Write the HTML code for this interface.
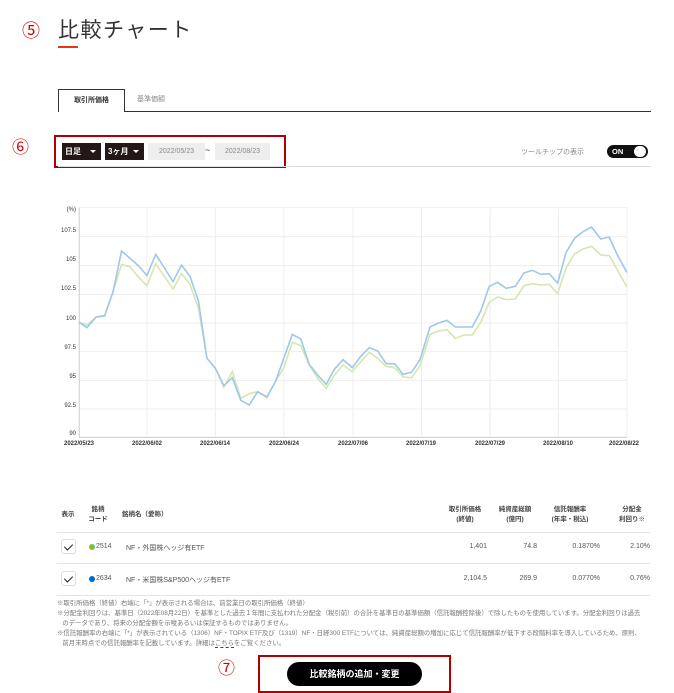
<!DOCTYPE html>
<html><head><meta charset="utf-8"><style>
*{margin:0;padding:0;box-sizing:border-box}
body{width:674px;height:692px;background:#fff;position:relative;overflow:hidden;font-family:"Liberation Sans","Noto Sans CJK JP",sans-serif;color:#333}
.a{position:absolute;white-space:nowrap}
.red{color:#d00000}
.sel{position:absolute;background:#231815;color:#fff;font-size:8px;font-weight:bold;height:17px;line-height:17px;padding-left:3px}
.sel:after{content:"";position:absolute;right:5px;top:7px;border:3px solid transparent;border-top:3px solid #fff}
.date{position:absolute;background:#eee;color:#888;font-size:7px;height:17px;line-height:17px;text-align:center}
.th{position:absolute;font-size:6.5px;font-weight:bold;color:#444;text-align:center;line-height:10px}
.td{position:absolute;font-size:7px;color:#555}
.r{text-align:right}
.cb{position:absolute;width:15px;height:15px;border:1px solid #ddd;border-radius:3px;background:#fff}
.cb:after{content:"";position:absolute;left:4px;top:2px;width:4px;height:7px;border:solid #222;border-width:0 1.5px 1.5px 0;transform:rotate(45deg)}
.hl{position:absolute;left:58px;width:593px;height:1px;background:#e4e4e4}
.note{position:absolute;left:57px;font-size:6.4px;color:#777;line-height:10px;white-space:nowrap}
.yl{position:absolute;width:26px;left:50px;text-align:right;font-size:6px;color:#333}
.xl{position:absolute;width:60px;margin-left:-30px;text-align:center;font-size:6px;font-weight:bold;color:#333;top:441px}
</style></head><body>
<div class="a red" style="left:22px;top:17px;font-size:18px">⑤</div>
<div class="a" style="left:58px;top:14px;font-size:21px;color:#333;letter-spacing:1.5px">比較チャート</div>
<div class="a" style="left:58px;top:46px;width:20px;height:2px;background:#e8380d"></div>

<div class="a" style="left:58px;top:89px;width:67px;height:23px;border:1px solid #333;border-bottom:none;background:#fff;font-size:7px;font-weight:bold;text-align:center;line-height:21px">取引所価格</div>
<div class="a" style="left:137px;top:94px;font-size:7px;color:#888">基準価額</div>
<div class="a" style="left:124px;top:111px;width:527px;height:1px;background:#333"></div>

<div class="a red" style="left:12px;top:133px;font-size:17px">⑥</div>
<div class="a" style="left:54px;top:135px;width:232px;height:33px;border:2px solid #b20000"></div>
<div class="sel" style="left:62px;top:143px;width:39px">日足</div>
<div class="sel" style="left:105px;top:143px;width:39px">3ヶ月</div>
<div class="date" style="left:148px;top:143px;width:57px">2022/05/23</div>
<div class="a" style="left:205px;top:145px;font-size:9px">~</div>
<div class="date" style="left:215px;top:143px;width:55px">2022/08/23</div>
<div class="a" style="left:521px;top:147px;font-size:7px;color:#888">ツールチップの表示</div>
<div class="a" style="left:607px;top:145px;width:41px;height:13px;border-radius:7px;background:#111;color:#fff;font-size:7.5px;font-weight:bold;line-height:13px;padding-left:5px">ON</div>
<div class="a" style="left:634px;top:146px;width:12px;height:11px;border-radius:6px;background:#fff"></div>
<div class="a" style="left:58px;top:166px;width:593px;height:1px;background:#ddd"></div>

<svg class="a" style="left:50px;top:195px" width="600" height="260" viewBox="0 0 1560 780" preserveAspectRatio="none">
<g stroke="#eee" stroke-width="1" fill="none" vector-effect="non-scaling-stroke">
<path vector-effect="non-scaling-stroke" d="M76 125H1500M76 212H1500M76 298H1500M76 384H1500M76 470H1500M76 556H1500M76 642H1500M76 38H1500"/>
<path vector-effect="non-scaling-stroke" d="M252 38V727M430 38V727M608 38V727M788 38V727M966 38V727M1144 38V727M1322 38V727M1500 38V727"/>
</g>
<path vector-effect="non-scaling-stroke" d="M76 38V727H1500" stroke="#ccc" stroke-width="1" fill="none"/>
<polyline vector-effect="non-scaling-stroke" fill="none" stroke="#d3e8b0" stroke-width="1.6" points="76,382 96,390 120,366 142,364 164,290 186,208 208,216 230,246 252,272 275,206 297,244 320,282 342,236 364,268 386,340 408,490 430,520 452,576 474,530 496,610 518,596 540,590 564,608 586,560 608,518 630,442 652,452 674,510 696,550 718,580 740,540 762,510 786,530 808,500 830,472 852,490 874,514 896,518 918,546 940,548 962,512 988,418 1010,408 1032,404 1054,430 1076,420 1098,420 1120,382 1142,322 1164,306 1186,314 1210,312 1232,272 1254,266 1276,270 1298,268 1320,296 1342,218 1364,176 1386,162 1408,154 1432,180 1454,182 1476,226 1500,276"/>
<polyline vector-effect="non-scaling-stroke" fill="none" stroke="#9fc8e8" stroke-width="1.6" points="76,382 96,398 120,366 142,362 164,290 186,168 208,190 230,212 252,242 275,178 297,218 320,260 342,210 364,244 386,318 408,490 430,520 452,572 474,548 496,616 518,630 540,590 564,606 586,560 608,490 630,418 652,432 674,508 696,540 718,568 740,522 762,494 786,518 808,484 830,458 852,468 874,506 896,506 918,538 940,532 962,494 988,396 1010,384 1032,376 1054,396 1076,396 1098,396 1120,348 1142,274 1164,262 1186,280 1210,274 1232,234 1254,226 1276,238 1298,236 1320,264 1342,172 1364,130 1386,110 1408,96 1432,132 1454,126 1476,182 1500,232"/>
</svg>
<div class="yl" style="top:207px">(%)</div>
<div class="yl" style="top:228px">107.5</div>
<div class="yl" style="top:257px">105</div>
<div class="yl" style="top:286px">102.5</div>
<div class="yl" style="top:316px">100</div>
<div class="yl" style="top:345px">97.5</div>
<div class="yl" style="top:374px">95</div>
<div class="yl" style="top:403px">92.5</div>
<div class="yl" style="top:431px">90</div>
<div class="xl" style="left:79px">2022/05/23</div>
<div class="xl" style="left:147px">2022/06/02</div>
<div class="xl" style="left:215px">2022/06/14</div>
<div class="xl" style="left:284px">2022/06/24</div>
<div class="xl" style="left:353px">2022/07/06</div>
<div class="xl" style="left:421px">2022/07/19</div>
<div class="xl" style="left:490px">2022/07/29</div>
<div class="xl" style="left:558px">2022/08/10</div>
<div class="xl" style="left:624px">2022/08/22</div>

<div class="th" style="left:58px;top:510px;width:20px">表示</div>
<div class="th" style="left:86px;top:505px;width:24px">銘柄<br>コード</div>
<div class="th" style="left:122px;top:510px;text-align:left">銘柄名（愛称）</div>
<div class="th" style="left:440px;top:505px;width:50px">取引所価格<br>(終値)</div>
<div class="th" style="left:490px;top:505px;width:50px">純資産総額<br>(億円)</div>
<div class="th" style="left:540px;top:505px;width:60px">信託報酬率<br>(年率・税込)</div>
<div class="th" style="left:610px;top:505px;width:44px">分配金<br>利回り※</div>
<div class="hl" style="top:532px;left:57px"></div>
<div class="cb" style="left:61px;top:539px"></div>
<div class="a" style="left:89px;top:544px;width:6px;height:6px;border-radius:50%;background:#7ac143"></div>
<div class="td" style="left:96px;top:543px">2514</div>
<div class="td" style="left:126px;top:543px">NF・外国株ヘッジ有ETF</div>
<div class="td r" style="left:400px;top:543px;width:87px">1,401</div>
<div class="td r" style="left:480px;top:543px;width:57px">74.8</div>
<div class="td r" style="left:540px;top:543px;width:60px">0.1870%</div>
<div class="td r" style="left:600px;top:543px;width:50px">2.10%</div>
<div class="hl" style="top:563px;left:57px"></div>
<div class="cb" style="left:61px;top:571px"></div>
<div class="a" style="left:89px;top:576px;width:6px;height:6px;border-radius:50%;background:#0068c8"></div>
<div class="td" style="left:96px;top:575px">2634</div>
<div class="td" style="left:126px;top:575px">NF・米国株S&amp;P500ヘッジ有ETF</div>
<div class="td r" style="left:400px;top:575px;width:87px">2,104.5</div>
<div class="td r" style="left:480px;top:575px;width:57px">269.9</div>
<div class="td r" style="left:540px;top:575px;width:60px">0.0770%</div>
<div class="td r" style="left:600px;top:575px;width:50px">0.76%</div>
<div class="hl" style="top:595px;left:57px"></div>

<div class="note" style="top:599px">※取引所価格（終値）右端に「*」が表示される場合は、前営業日の取引所価格（終値）<br>※分配金利回りは、基準日（2022年08月22日）を基準とした過去１年間に支払われた分配金（税引前）の合計を基準日の基準価額（信託報酬控除後）で除したものを使用しています。分配金利回りは過去<br>&nbsp;&nbsp;&nbsp;のデータであり、将来の分配金額を示唆あるいは保証するものではありません。<br>※信託報酬率の右端に「*」が表示されている（1306）NF・TOPIX ETF及び（1319）NF・日経300 ETFについては、純資産総額の増加に応じて信託報酬率が低下する段階料率を導入しているため、原則、<br>&nbsp;&nbsp;&nbsp;前月末時点での信託報酬率を記載しています。詳細は<span style="border-bottom:1px dashed #d00">こちら</span>をご覧ください。</div>

<div class="a red" style="left:218px;top:654px;font-size:17px">⑦</div>
<div class="a" style="left:258px;top:655px;width:193px;height:38px;border:2px solid #b20000"></div>
<div class="a" style="left:287px;top:662px;width:135px;height:24px;border-radius:12px;background:#000;color:#fff;font-size:9px;font-weight:bold;text-align:center;line-height:24px">比較銘柄の追加・変更</div>
</body></html>
